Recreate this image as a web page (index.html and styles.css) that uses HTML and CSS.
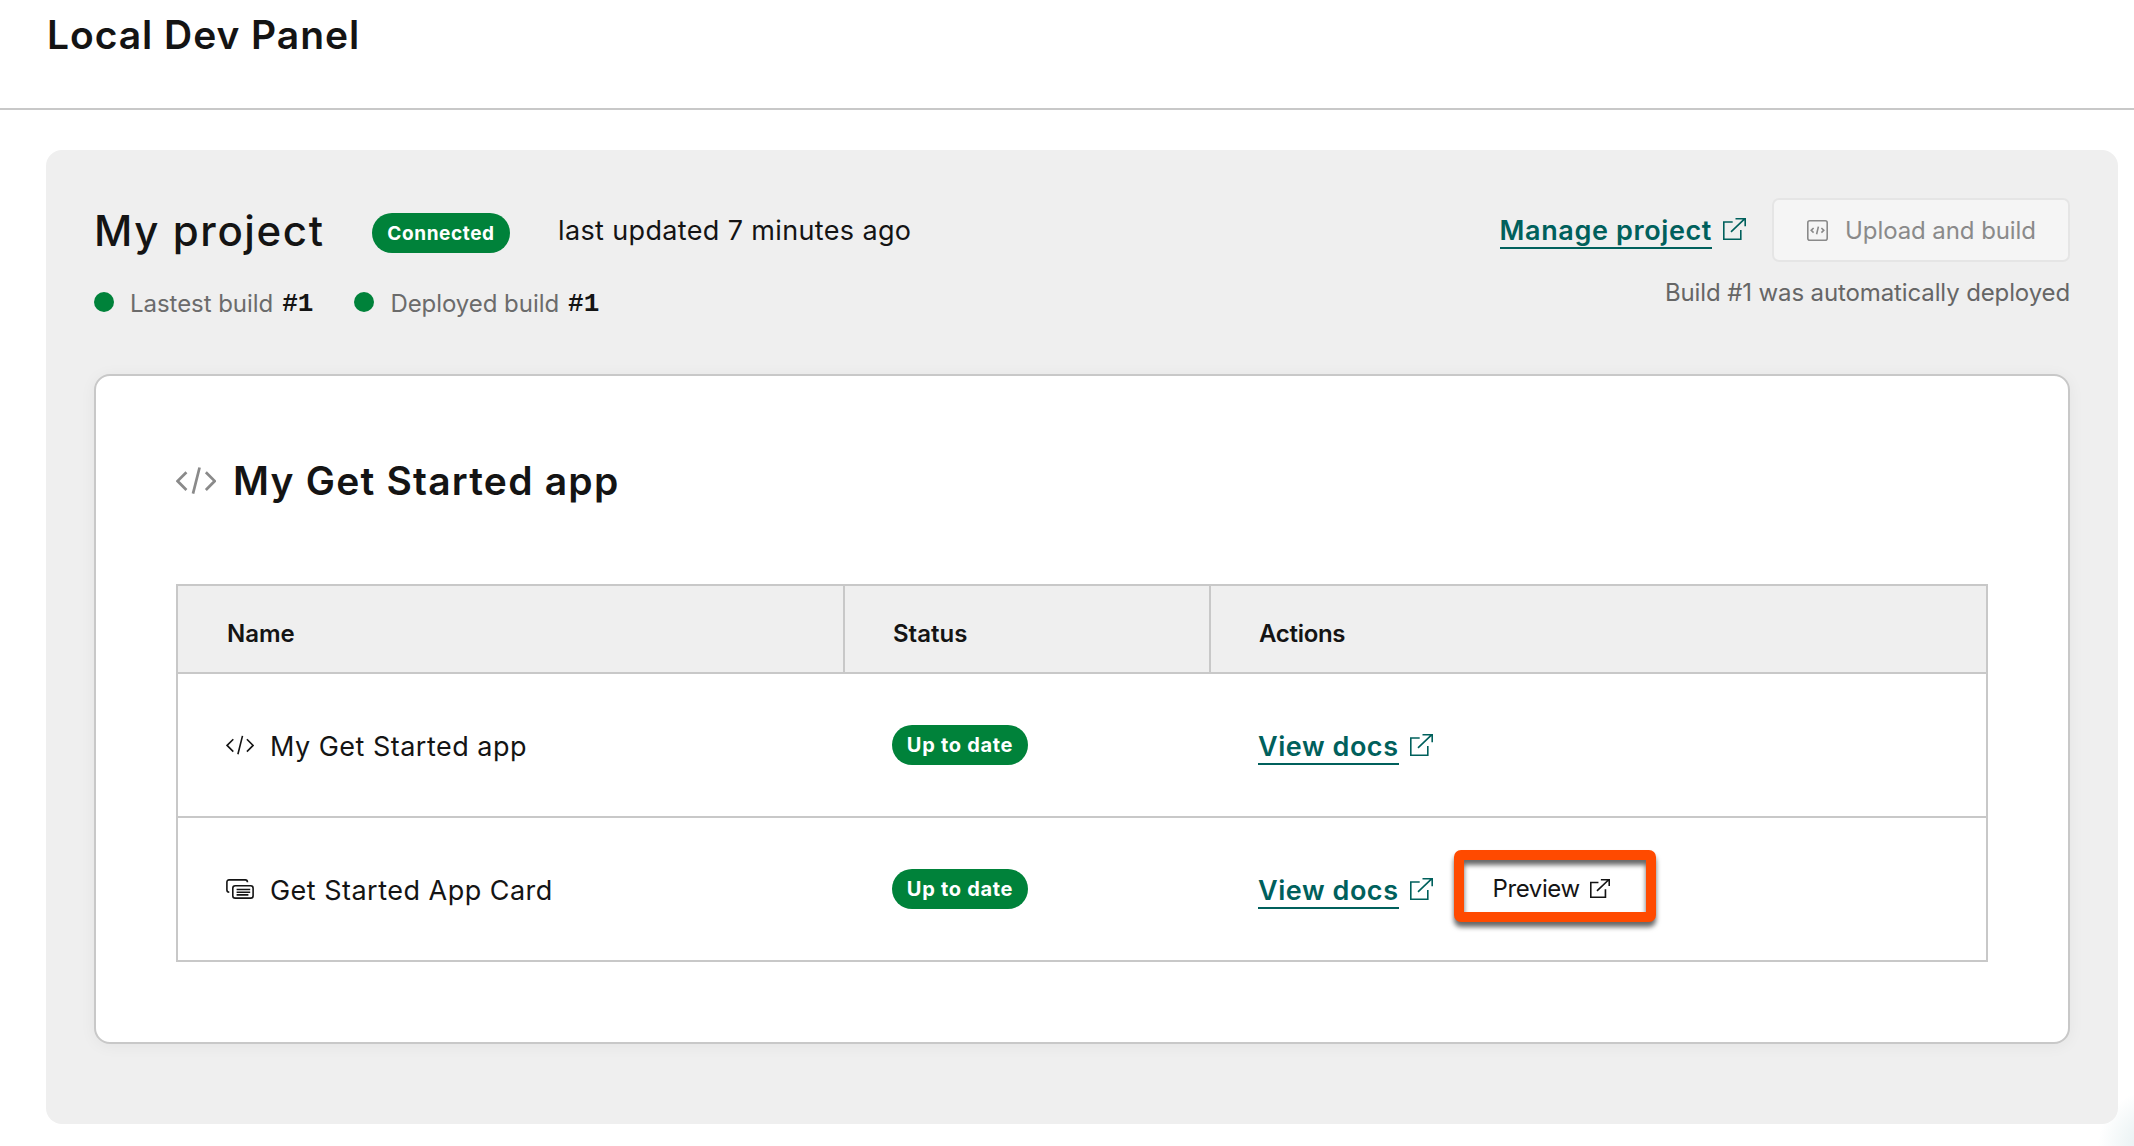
FILE: index.html
```
<!DOCTYPE html>
<html lang="en">
<head>
  <meta charset="UTF-8">
  <meta name="viewport" content="width=device-width, initial-scale=1.0">
  <title>Local Dev Panel</title>
  <link rel="stylesheet" href="styles.css">
</head>
<body>
  <!-- Shared icons -->
  <svg class="sprite" width="0" height="0">
    <symbol id="icon-external" viewBox="0 0 23 22">
      <path d="M9.7 4H.8v17.2h17V12M8 13.8 21.6.9M12.5.8h9.7v7.4"/>
    </symbol>
    <symbol id="icon-code" viewBox="0 0 28 20">
      <path d="M7.3 4.2 1.1 10.4l6.2 6.2M16.5.9l-4.6 18.3M20.9 4.2l6.2 6.2-6.2 6.2"/>
    </symbol>
    <symbol id="icon-card" viewBox="0 0 28 20">
      <path d="M3.3 13.2C1.7 13.1.9 12.4.9 11V3.2C.9 1.8 1.7.9 3.1.9h16.3c1.4 0 2 .8 2.1 2.4"/>
      <rect x="6.8" y="6.8" width="20.3" height="12.3" rx="2.4"/>
      <path d="M10.6 10.5h13.6M10.6 13.2h13.6M10.6 15.9h11.8"/>
    </symbol>
    <symbol id="icon-file-code" viewBox="0 0 21 21">
      <rect x=".8" y=".8" width="19.4" height="19.4" rx="2"/>
      <path d="M6.6 8 4.2 10.3l2.4 2.3M11.4 6.6l-1.8 7.6M14.4 8l2.4 2.3-2.4 2.3"/>
    </symbol>
  </svg>

  <header class="header">
    <h1>Local Dev Panel</h1>
  </header>

  <main class="panel">
    <div class="project">
      <div class="project-info">
        <div class="project-title">
          <h2>My project</h2>
          <span class="tag tag-connected">Connected</span>
          <span class="updated">last updated 7 minutes ago</span>
        </div>
        <div class="builds">
          <span class="dot"></span>
          <span class="build">Lastest build</span>
          <span class="build-number">#1</span>
          <span class="dot dot-deployed"></span>
          <span class="build">Deployed build</span>
          <span class="build-number">#1</span>
        </div>
      </div>
      <div class="project-actions">
        <div class="project-buttons">
          <a class="link" href="#"><span class="link-text manage">Manage project</span><svg class="icon-external"><use href="#icon-external"/></svg></a>
          <button class="upload" disabled>
            <svg class="icon-file"><use href="#icon-file-code"/></svg>
            <span>Upload and build</span>
          </button>
        </div>
        <div class="deploy-note">Build #1 was automatically deployed</div>
      </div>
    </div>

    <section class="card">
      <div class="card-title">
        <svg class="icon-app"><use href="#icon-code"/></svg>
        <h2>My Get Started app</h2>
      </div>
      <table>
        <thead>
          <tr>
            <th class="col-name">Name</th>
            <th class="col-status">Status</th>
            <th class="col-actions">Actions</th>
          </tr>
        </thead>
        <tbody>
          <tr>
            <td><div class="cell name"><svg class="icon-row"><use href="#icon-code"/></svg><span>My Get Started app</span></div></td>
            <td><div class="cell"><span class="tag tag-status">Up to date</span></div></td>
            <td>
              <div class="cell actions">
                <a class="link" href="#"><span class="link-text">View docs</span><svg class="icon-external"><use href="#icon-external"/></svg></a>
              </div>
            </td>
          </tr>
          <tr>
            <td><div class="cell name"><svg class="icon-row"><use href="#icon-card"/></svg><span>Get Started App Card</span></div></td>
            <td><div class="cell"><span class="tag tag-status">Up to date</span></div></td>
            <td>
              <div class="cell actions">
                <a class="link" href="#"><span class="link-text">View docs</span><svg class="icon-external"><use href="#icon-external"/></svg></a>
                <button class="preview">
                  <span>Preview</span>
                  <svg class="icon-preview"><use href="#icon-external"/></svg>
                </button>
              </div>
            </td>
          </tr>
        </tbody>
      </table>
    </section>
  </main>
</body>
</html>
```
FILE: styles.css
```
* {
  box-sizing: border-box;
}

body {
  margin: 0;
  min-height: 1146px;
  font-family: "Inter", sans-serif;
  font-size: 27px;
  color: #141414;
  background: radial-gradient(circle at 2154px 1146px, #e0ecee 0, #ffffff 56px) #ffffff;
}

h1,
h2 {
  margin: 0;
  font-size: 39px;
  font-weight: 600;
  white-space: nowrap;
}

svg {
  display: block;
  flex: none;
  fill: none;
  stroke: currentColor;
  stroke-width: 1.6;
}

.sprite {
  position: absolute;
}

.header {
  height: 110px;
  padding: 15px 47px 0;
  border-bottom: 2px solid #c8c8c8;
}

.header h1 {
  line-height: 40px;
  letter-spacing: 0.95px;
}

.panel {
  height: 974px;
  margin: 40px 16px 0 46px;
  padding: 48px;
  background: #efefef;
  border-radius: 16px;
}

/* Project summary */
.project {
  display: flex;
  justify-content: space-between;
  height: 176px;
}

.project-title {
  display: flex;
  align-items: center;
  height: 64px;
}

.project-title h2 {
  width: 278px;
  font-size: 42px;
  font-weight: 500;
  letter-spacing: 1.6px;
}

.tag {
  display: flex;
  align-items: center;
  justify-content: center;
  height: 40px;
  border-radius: 20px;
  background: #00823a;
  color: #ffffff;
  font-size: 19px;
  font-weight: 700;
  white-space: nowrap;
}

.tag-connected {
  width: 138px;
  margin-top: 6px;
  letter-spacing: 0.6px;
}

.tag-status {
  width: 136px;
  font-size: 20px;
  letter-spacing: 0.7px;
}

.updated {
  margin-left: 48px;
  letter-spacing: 0.36px;
}

.builds {
  display: flex;
  align-items: center;
  height: 30px;
  margin-top: 26px;
  font-size: 24px;
}

.dot {
  width: 20px;
  height: 20px;
  margin: -2px 16px 0 0;
  border-radius: 50%;
  background: #00823a;
}

.dot-deployed {
  margin-left: 41px;
}

.build {
  color: #6b6b6b;
  letter-spacing: -0.05px;
}

.build-number {
  margin-left: 9px;
  padding-top: 1px;
  font-family: "Liberation Mono", monospace;
  font-size: 26px;
  font-weight: 700;
}

.project-actions {
  display: flex;
  flex-direction: column;
  align-items: flex-end;
}

.project-buttons {
  display: flex;
  align-items: center;
}

.link {
  display: flex;
  align-items: center;
  color: #00605c;
  font-weight: 600;
  text-decoration: none;
}

.link-text {
  height: 38px;
  padding-top: 4px;
  line-height: 32px;
  border-bottom: 2px solid #00605c;
  letter-spacing: 0.55px;
  white-space: nowrap;
}

.manage {
  letter-spacing: 0.62px;
}

.icon-external {
  width: 23px;
  height: 22px;
  margin: -3px 0 0 11px;
}

.upload {
  display: flex;
  align-items: center;
  width: 298px;
  height: 64px;
  margin-left: 26px;
  padding: 0 0 0 33px;
  border: 2px solid #e5e5e5;
  border-radius: 7px;
  background: #f5f5f5;
  color: #8a8a8a;
  font-family: inherit;
  font-size: 24px;
  letter-spacing: -0.08px;
}

.icon-file {
  width: 21px;
  height: 21px;
  margin-right: 17px;
}

.deploy-note {
  margin-top: 16px;
  line-height: 30px;
  font-size: 24px;
  color: #666666;
  letter-spacing: -0.12px;
}

/* App card */
.card {
  height: 670px;
  padding: 81px 80px 0;
  border: 2px solid #c8c8c8;
  border-radius: 16px;
  background: #ffffff;
  box-shadow: 0 2px 16px rgba(0, 0, 0, 0.05);
}

.card-title {
  display: flex;
  align-items: center;
  height: 46px;
  margin-bottom: 81px;
}

.card-title h2 {
  letter-spacing: 1.22px;
}

.icon-app {
  width: 40px;
  height: 29px;
  margin-right: 17px;
  color: #8a8a8a;
  stroke-width: 1.9;
}

table {
  width: 1812px;
  border: 2px solid #c8c8c8;
  border-spacing: 0;
  table-layout: fixed;
}

th {
  height: 88px;
  padding: 9px 0 0 48px;
  border-right: 2px solid #c8c8c8;
  border-bottom: 2px solid #c8c8c8;
  background: #efefef;
  font-size: 24px;
  font-weight: 600;
  text-align: left;
}

th:last-child {
  border-right: none;
}

.col-name {
  width: 667px;
  padding-left: 49px;
}

.col-status {
  width: 366px;
}

.col-actions {
  letter-spacing: -0.3px;
}

td {
  height: 142px;
  padding: 0 0 0 47px;
}

td:first-child {
  padding-left: 48px;
}

tbody tr:first-child td {
  height: 144px;
  border-bottom: 2px solid #c8c8c8;
}

.cell {
  display: flex;
  align-items: center;
}

.name {
  padding-top: 3px;
  letter-spacing: 0.48px;
}

.icon-row {
  width: 28px;
  height: 20px;
  margin: -4px 16px 0 0;
}

.actions {
  height: 72px;
  padding-top: 2px;
}

/* Highlighted button */
.preview {
  display: flex;
  align-items: center;
  width: 202px;
  height: 72px;
  margin: -8px 0 0 21px;
  padding: 5px 0 0 29px;
  border: 10px solid #ff4a00;
  border-radius: 7px;
  background: #ffffff;
  box-shadow: 0 5px 5px rgba(0, 0, 0, 0.6), inset 0 5px 5px rgba(0, 0, 0, 0.6);
  color: #141414;
  font-family: inherit;
  font-size: 24px;
  letter-spacing: -0.4px;
}

.icon-preview {
  width: 20px;
  height: 19px;
  margin-left: 10px;
  stroke-width: 1.9;
}
```
